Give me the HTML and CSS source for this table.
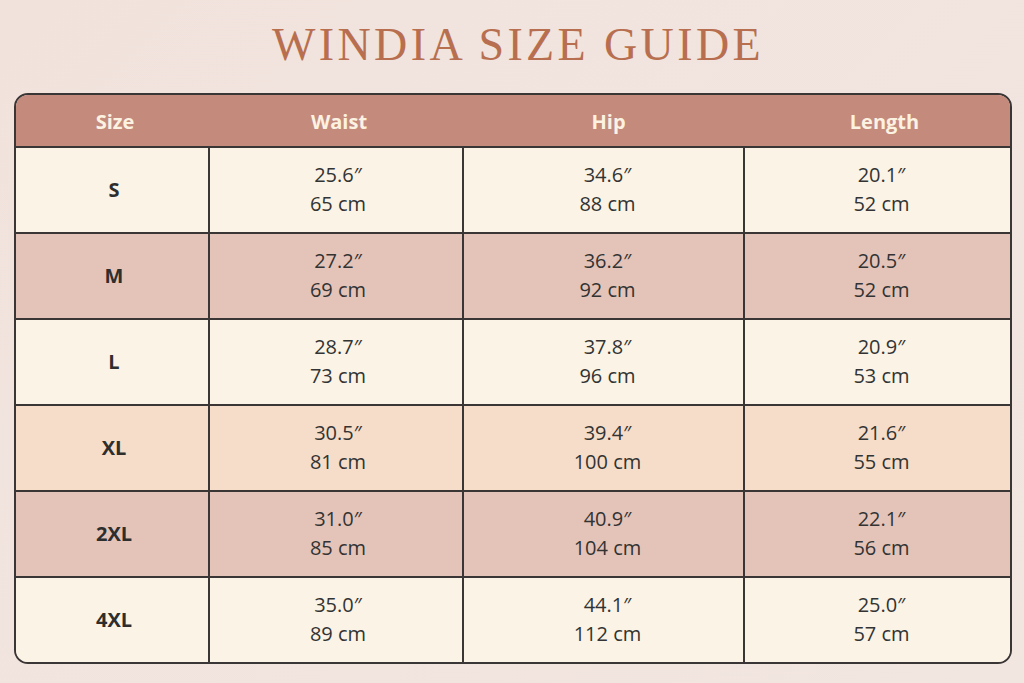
FILE: index.html
```html
<!DOCTYPE html>
<html>
<head>
<meta charset="utf-8">
<link rel="stylesheet" href="styles.css">
</head>
<body>
<h1 class="title">WINDIA SIZE GUIDE</h1>
<div class="chart">
  <div class="row head">
    <div class="cell">Size</div><div class="cell">Waist</div><div class="cell">Hip</div><div class="cell">Length</div>
  </div>
  <div class="row cream">
    <div class="cell size">S</div>
    <div class="cell"><span>25.6″</span><span>65 cm</span></div>
    <div class="cell"><span>34.6″</span><span>88 cm</span></div>
    <div class="cell"><span>20.1″</span><span>52 cm</span></div>
  </div>
  <div class="row rose">
    <div class="cell size">M</div>
    <div class="cell"><span>27.2″</span><span>69 cm</span></div>
    <div class="cell"><span>36.2″</span><span>92 cm</span></div>
    <div class="cell"><span>20.5″</span><span>52 cm</span></div>
  </div>
  <div class="row cream">
    <div class="cell size">L</div>
    <div class="cell"><span>28.7″</span><span>73 cm</span></div>
    <div class="cell"><span>37.8″</span><span>96 cm</span></div>
    <div class="cell"><span>20.9″</span><span>53 cm</span></div>
  </div>
  <div class="row peach">
    <div class="cell size">XL</div>
    <div class="cell"><span>30.5″</span><span>81 cm</span></div>
    <div class="cell"><span>39.4″</span><span>100 cm</span></div>
    <div class="cell"><span>21.6″</span><span>55 cm</span></div>
  </div>
  <div class="row rose">
    <div class="cell size">2XL</div>
    <div class="cell"><span>31.0″</span><span>85 cm</span></div>
    <div class="cell"><span>40.9″</span><span>104 cm</span></div>
    <div class="cell"><span>22.1″</span><span>56 cm</span></div>
  </div>
  <div class="row cream last">
    <div class="cell size">4XL</div>
    <div class="cell"><span>35.0″</span><span>89 cm</span></div>
    <div class="cell"><span>44.1″</span><span>112 cm</span></div>
    <div class="cell"><span>25.0″</span><span>57 cm</span></div>
  </div>
</div>
</body>
</html>
```
FILE: styles.css
```css
html, body {
  margin: 0;
  padding: 0;
}
body {
  width: 1024px;
  height: 683px;
  background: linear-gradient(135deg, #f1e2dc 0%, #f2e6e0 100%);
  font-family: "Open Sans", "Noto Sans", sans-serif;
  color: #333;
  overflow: hidden;
}
.title {
  margin: 0;
  padding-top: 19px;
  height: 93px;
  box-sizing: border-box;
  text-align: center;
  font-family: "Liberation Serif", serif;
  font-weight: normal;
  font-size: 46px;
  line-height: 52px;
  letter-spacing: 3.4px;
  color: #b86f4f;
  padding-left: 12px;
}
.chart {
  margin-left: 14px;
  width: 998px;
  border: 2px solid #3a3636;
  border-radius: 14px;
  overflow: hidden;
  box-sizing: border-box;
}
.row {
  display: grid;
  grid-template-columns: 194px 254px 281px 1fr;
  height: 86px;
  border-bottom: 2px solid #3a3636;
  box-sizing: border-box;
}
.row.last {
  border-bottom: none;
  height: 84px;
}
.row.head {
  height: 53px;
  background: #c48a7b;
  color: #fcf2e2;
  font-weight: 700;
  font-size: 20px;
}
.row.head .cell {
  border-right: none;
}
.cream { background: #faf3e6; }
.rose { background: #e4c4b9; }
.peach { background: #f5ddc9; }
.cell {
  display: flex;
  flex-direction: column;
  align-items: center;
  justify-content: center;
  border-right: 2px solid #3a3636;
  font-size: 20px;
  line-height: 29px;
  color: #333;
  padding-left: 4px;
  padding-bottom: 2px;
}
.cell:nth-child(3) { padding-left: 8px; }
.cell:nth-child(4) { padding-left: 8px; }
.row.head .cell:nth-child(4) { padding-left: 14px; }
.row.head .cell { color: #fcf2e2; padding-bottom: 0; padding-top: 1px; }
.cell:last-child { border-right: none; }
.cell.size {
  font-weight: 700;
  color: #2e2e2e;
}
.cell span { display: block; }
```
